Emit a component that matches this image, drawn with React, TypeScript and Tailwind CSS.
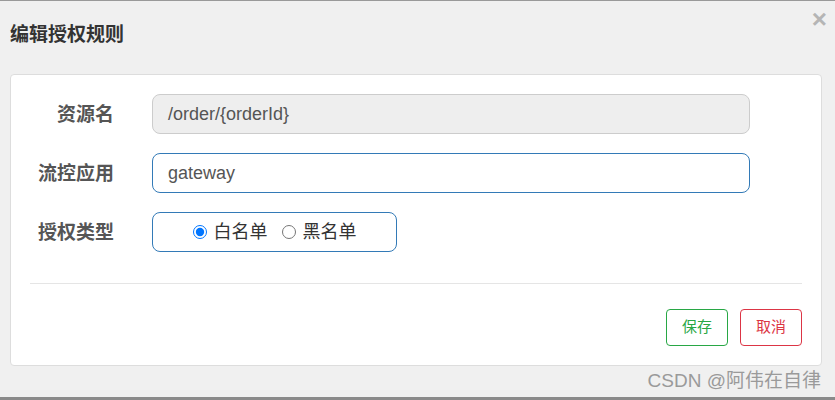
import React from 'react';

const Row: React.FC<{ label: string; children: React.ReactNode }> = ({ label, children }) => (
  <div className="flex items-center">
    <div className="w-[84px] text-right text-[19px] font-bold text-[#555] leading-none">{label}</div>
    <div className="ml-[38px]">{children}</div>
  </div>
);

export default function App() {
  return (
    <div className="w-[835px] h-[400px] bg-[#f0f0f0] border-t border-[#999] flex flex-col font-['Liberation_Sans','Noto_Sans_CJK_SC',sans-serif]">
      <div className="relative h-[73px]">
        <div className="pl-[10px] pt-[22px] text-[19px] leading-[24px] font-bold text-[#333]">编辑授权规则</div>
        <button className="absolute right-[8px] top-[5px] text-[26px] leading-none font-bold text-[#b5b5b5]">×</button>
      </div>

      <div className="mx-[10px] w-[812px] bg-white border border-[#ddd] rounded-[4px] px-[19px] pt-[19px] pb-[19px]">
        <div className="flex flex-col gap-[19px]">
          <Row label="资源名">
            <div className="w-[598px] h-[40px] rounded-[8px] border border-[#ccc] bg-[#eee] flex items-center px-[15px] text-[18px] text-[#555]">
              /order/{'{'}orderId{'}'}
            </div>
          </Row>
          <Row label="流控应用">
            <div className="w-[598px] h-[40px] rounded-[8px] border border-[#337ab7] bg-white flex items-center px-[15px] text-[18px] text-[#555]">
              gateway
            </div>
          </Row>
          <Row label="授权类型">
            <div className="w-[245px] h-[40px] rounded-[8px] border border-[#337ab7] bg-white flex items-center justify-center text-[18px] text-[#333]">
              <label className="flex items-center">
                <input type="radio" name="strategy" defaultChecked className="w-[14px] h-[14px] m-0" />
                <span className="ml-[7px]">白名单</span>
              </label>
              <label className="flex items-center ml-[14px]">
                <input type="radio" name="strategy" className="w-[14px] h-[14px] m-0" />
                <span className="ml-[7px]">黑名单</span>
              </label>
            </div>
          </Row>
        </div>

        <div className="mt-[31px] border-t border-[#e5e5e5]" />

        <div className="mt-[25px] flex justify-end gap-[12px]">
          <button className="w-[62px] h-[37px] rounded-[4px] border border-[#28a745] text-[#28a745] text-[15px] bg-white">保存</button>
          <button className="w-[62px] h-[37px] rounded-[4px] border border-[#dc3545] text-[#dc3545] text-[15px] bg-white">取消</button>
        </div>
      </div>

      <div className="flex-1 flex items-center justify-end pr-[14px] text-[19px] text-[#9a9a9a]">CSDN @阿伟在自律</div>
      <div className="h-[3px] bg-[#8a8a8a]" />
    </div>
  );
}
